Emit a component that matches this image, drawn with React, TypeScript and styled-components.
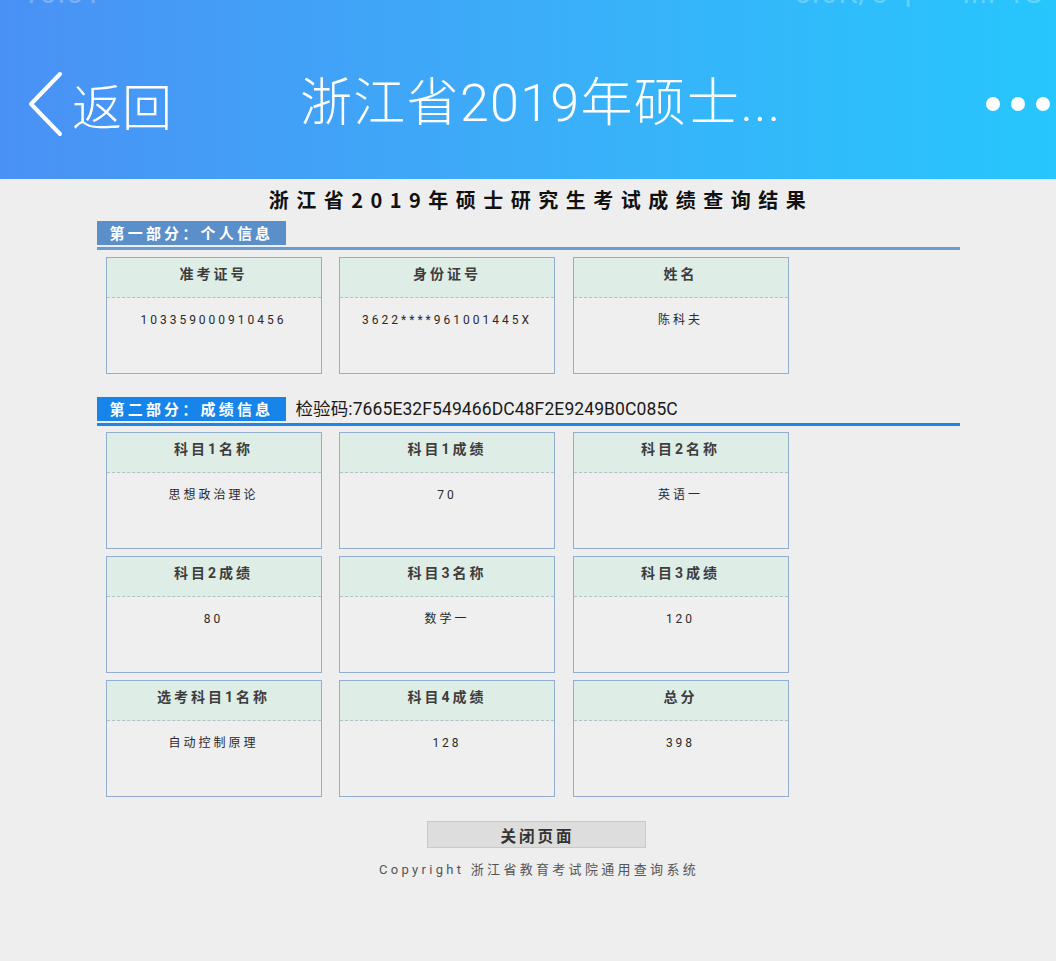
import React from 'react';
import styled, { createGlobalStyle } from 'styled-components';

const GlobalStyle = createGlobalStyle`
    html, body {
        margin: 0;
        padding: 0;
        background: #eeeeee;
    }
    body {
        font-family: Roboto, "Noto Sans CJK SC", sans-serif;
        width: 1056px;
        min-height: 961px;
    }
`;

const NavBar = styled.header`
    height: 179px;
    background: linear-gradient(90deg, #4a91f5 0%, #3ab0f9 55%, #27c6fd 100%);
    color: #ffffff;
    overflow: hidden;
`;

const StatusBar = styled.div`
    height: 29px;
    overflow: hidden;
    display: flex;
    justify-content: space-between;
    padding: 0 12px 0 22px;
    color: rgba(255, 255, 255, 0.28);
    font-size: 30px;
    line-height: 30px;
`;

const StatusText = styled.span`
    display: block;
    margin-top: -22px;
    letter-spacing: 1px;
`;

const NavRow = styled.div`
    height: 150px;
    display: flex;
    align-items: center;
    padding: 0 6px 0 26px;
`;

const BackButton = styled.div`
    width: 274px;
    display: flex;
    align-items: center;
    gap: 8px;
    font-family: "Noto Sans CJK SC", sans-serif;
    font-weight: 300;
    font-size: 50px;
    line-height: 1;
`;

const NavTitle = styled.div`
    flex: 1;
    font-family: Roboto, "Noto Sans CJK SC", sans-serif;
    font-weight: 300;
    font-size: 52px;
    letter-spacing: 1.3px;
    line-height: 1;
    white-space: nowrap;
`;

const Dots = styled.div`
    display: flex;
    gap: 11px;
`;

const Dot = styled.span`
    width: 14px;
    height: 14px;
    border-radius: 50%;
    background: #ffffff;
`;

const Main = styled.main`
    width: 863px;
    margin: 0 auto;
`;

const PageTitle = styled.h1`
    margin: 0;
    height: 42px;
    line-height: 42px;
    padding-left: 26px;
    text-align: center;
    font-family: "Noto Sans CJK SC", sans-serif;
    font-size: 20px;
    font-weight: 700;
    letter-spacing: 7.5px;
    color: #111111;
`;

const SectionHead = styled.div<{ $color: string }>`
    display: flex;
    align-items: center;
    gap: 10px;
    padding-bottom: 2px;
    border-bottom: 3px solid ${(p) => p.$color};
`;

const SectionTag = styled.div<{ $bg: string }>`
    width: 189px;
    height: 24px;
    box-sizing: border-box;
    padding-left: 13px;
    background: ${(p) => p.$bg};
    color: #ffffff;
    font-family: "Noto Sans CJK SC", sans-serif;
    font-size: 15px;
    font-weight: 700;
    line-height: 24px;
    letter-spacing: 3.2px;
    white-space: nowrap;
`;

const CheckCode = styled.span`
    font-size: 17.5px;
    letter-spacing: 0.1px;
    color: #1a1a1a;
    line-height: 24px;
`;

const CardGrid = styled.div<{ $top: number }>`
    display: grid;
    grid-template-columns: repeat(3, 216px);
    column-gap: 17.5px;
    row-gap: 7px;
    padding-left: 9px;
    margin-top: ${(p) => p.$top}px;
    margin-bottom: 23px;
`;

const Card = styled.div`
    height: 117px;
    box-sizing: border-box;
    border: 1px solid #93afd0;
    background: #efefef;
`;

const CardHead = styled.div`
    height: 39px;
    line-height: 33px;
    background: #deede6;
    border-bottom: 1px dashed #b5bfc7;
    text-align: center;
    font-family: Roboto, "Noto Sans CJK SC", sans-serif;
    font-size: 14px;
    font-weight: 700;
    letter-spacing: 3px;
    color: #3d3d3d;
`;

const CardValue = styled.div`
    padding-top: 14px;
    text-align: center;
    font-size: 12px;
    line-height: 16px;
    letter-spacing: 3px;
    color: #2a2a2a;
`;

const Footer = styled.div`
    padding-left: 22px;
    margin-top: 24px;
    display: flex;
    flex-direction: column;
    align-items: center;
`;

const CloseButton = styled.button`
    width: 219px;
    height: 27px;
    margin-right: 6px;
    border: 1px solid #c9c9c9;
    background: #dddddd;
    font-family: "Noto Sans CJK SC", sans-serif;
    font-size: 15.5px;
    font-weight: 700;
    letter-spacing: 3px;
    color: #333333;
    padding: 0 0 0 3px;
    cursor: pointer;
`;

const Copyright = styled.p`
    margin: 12px 0 0;
    font-size: 13px;
    line-height: 20px;
    letter-spacing: 3.3px;
    color: #555555;
`;

const personal = [
    { label: '准考证号', value: '103359000910456' },
    { label: '身份证号', value: '3622****961001445X' },
    { label: '姓名', value: '陈科夫' },
];

const scores = [
    { label: '科目1名称', value: '思想政治理论' },
    { label: '科目1成绩', value: '70' },
    { label: '科目2名称', value: '英语一' },
    { label: '科目2成绩', value: '80' },
    { label: '科目3名称', value: '数学一' },
    { label: '科目3成绩', value: '120' },
    { label: '选考科目1名称', value: '自动控制原理' },
    { label: '科目4成绩', value: '128' },
    { label: '总分', value: '398' },
];

const ChevronLeft = () => (
    <svg width="38" height="66" viewBox="0 0 38 66" fill="none">
        <path
            d="M34 3 L5 33 L34 63"
            stroke="#ffffff"
            strokeWidth="4"
            strokeLinecap="round"
            strokeLinejoin="round"
        />
    </svg>
);

const InfoCard = ({ label, value }: { label: string; value: string }) => (
    <Card>
        <CardHead>{label}</CardHead>
        <CardValue>{value}</CardValue>
    </Card>
);

export default function App() {
    return (
        <>
            <GlobalStyle />
            <NavBar>
                <StatusBar>
                    <StatusText>10:51</StatusText>
                    <StatusText>••• 5.0K/s ⚲ ✕ ıııı 4G</StatusText>
                </StatusBar>
                <NavRow>
                    <BackButton>
                        <ChevronLeft />
                        <span>返回</span>
                    </BackButton>
                    <NavTitle>浙江省2019年硕士...</NavTitle>
                    <Dots>
                        <Dot />
                        <Dot />
                        <Dot />
                    </Dots>
                </NavRow>
            </NavBar>
            <Main>
                <PageTitle>浙江省2019年硕士研究生考试成绩查询结果</PageTitle>
                <SectionHead $color="#6b9ad1">
                    <SectionTag $bg="#5b8fc9">第一部分：个人信息</SectionTag>
                </SectionHead>
                <CardGrid $top={7}>
                    {personal.map((item) => (
                        <InfoCard key={item.label} {...item} />
                    ))}
                </CardGrid>
                <SectionHead $color="#1e87e6">
                    <SectionTag $bg="#1784ea">第二部分：成绩信息</SectionTag>
                    <CheckCode>检验码:7665E32F549466DC48F2E9249B0C085C</CheckCode>
                </SectionHead>
                <CardGrid $top={6}>
                    {scores.map((item) => (
                        <InfoCard key={item.label} {...item} />
                    ))}
                </CardGrid>
                <Footer>
                    <CloseButton>关闭页面</CloseButton>
                    <Copyright>Copyright 浙江省教育考试院通用查询系统</Copyright>
                </Footer>
            </Main>
        </>
    );
}
